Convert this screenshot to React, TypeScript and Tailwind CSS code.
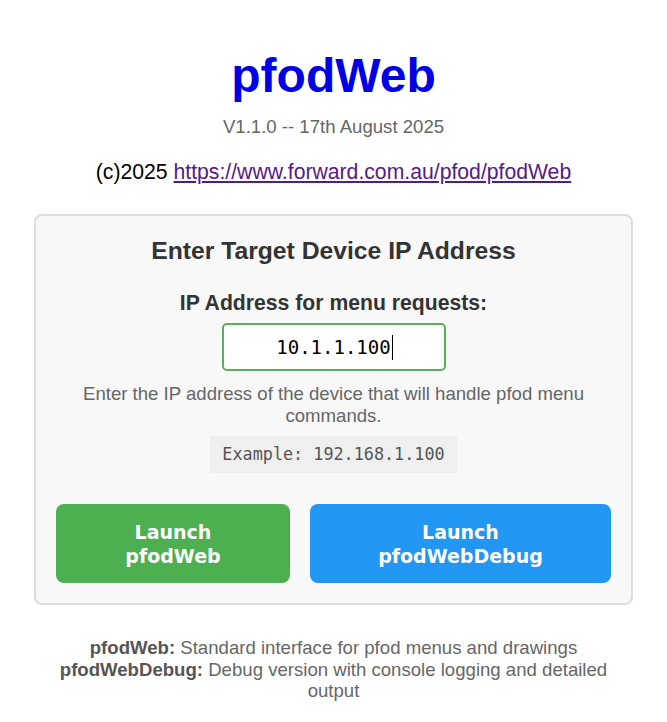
import { useState } from 'react';

export default function App() {
  const [ip, setIp] = useState('10.1.1.100');

  return (
    <div className="min-h-screen bg-white text-center font-['Liberation_Sans',Arial,sans-serif]">
      <div className="mx-auto w-[599px] pt-[48px] pb-[16px]">
        <h1 className="text-[48px] leading-[56px] font-bold text-[#0000e6]">pfodWeb</h1>
        <p className="mt-[12px] text-[18.6px] leading-[22px] text-[#666]">V1.1.0 -- 17th August 2025</p>
        <p className="mt-[22px] text-[21.2px] leading-[24px] text-black">
          (c)2025{' '}
          <a href="#" className="text-[#551a8b] underline">
            https://www.forward.com.au/pfod/pfodWeb
          </a>
        </p>

        <div className="mt-[30px] rounded-[8px] border-2 border-[#ddd] bg-[#f8f8f8] px-[20px] pt-[20px] pb-[20px]">
          <h2 className="text-[24.7px] leading-[30px] font-bold text-[#333]">Enter Target Device IP Address</h2>

          <label htmlFor="ip" className="mt-[25px] block text-[21.2px] leading-[24px] font-bold text-[#333]">
            IP Address for menu requests:
          </label>
          <div className="relative mx-auto mt-[8px] w-[224px]">
            <input
              id="ip"
              type="text"
              value={ip}
              onChange={(e) => setIp(e.target.value)}
              className="block h-[48px] w-full rounded-[5px] border-2 border-[#5cae5f] bg-white text-center font-['DejaVu_Sans_Mono',monospace] text-[19px] text-black caret-transparent outline-none"
            />
            {/* caret, the field has focus in the picture */}
            <span className="pointer-events-none absolute top-[12px] left-[170px] h-[25px] w-px bg-black" />
          </div>

          <p className="mx-auto mt-[12px] text-[18.6px] leading-[22px] text-[#666]">
            Enter the IP address of the device that will handle pfod menu commands.
          </p>

          <div className="mt-[9px]">
            <span className="inline-block bg-[#efefef] px-[12px] font-['DejaVu_Sans_Mono',monospace] text-[16.8px] leading-[37px] text-[#555]">
              Example: 192.168.1.100
            </span>
          </div>

          <div className="mt-[31px] flex gap-[20px]">
            <button className="h-[79px] w-[234px] rounded-[8px] bg-[#4caf50] font-['DejaVu_Sans',sans-serif] text-[19px] leading-[24px] font-bold text-white">
              Launch
              <br />
              pfodWeb
            </button>
            <button className="h-[79px] flex-1 rounded-[8px] bg-[#2196f3] font-['DejaVu_Sans',sans-serif] text-[19px] leading-[24px] font-bold text-white">
              Launch
              <br />
              pfodWebDebug
            </button>
          </div>
        </div>

        <div className="mt-[32px] px-[20px] text-[18.6px] leading-[21.5px] text-[#666]">
          <p>
            <strong className="text-[#555]">pfodWeb:</strong> Standard interface for pfod menus and drawings
          </p>
          <p>
            <strong className="text-[#555]">pfodWebDebug:</strong> Debug version with console logging and detailed output
          </p>
        </div>
      </div>
    </div>
  );
}
